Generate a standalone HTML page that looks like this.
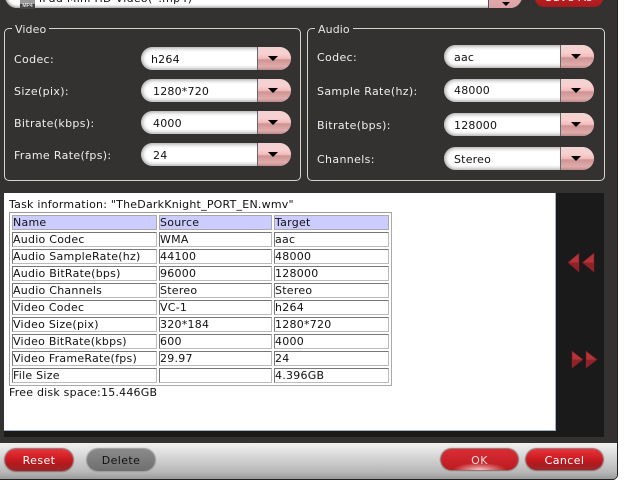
<!DOCTYPE html>
<html><head><meta charset="utf-8"><style>
html,body{margin:0;padding:0;background:#fff}
#w{position:relative;width:624px;height:490px;overflow:hidden;background:#fff;font-family:"DejaVu Sans",sans-serif;font-size:11px}
#win{position:absolute;left:0;top:0;width:617px;height:479px;background:#333231;border-bottom-right-radius:4px;box-shadow:1px 0 0 #222,0 1px 0 #222}
.a{position:absolute;white-space:nowrap}
.box{position:absolute;border:1px solid #d5d5cc;border-radius:5px;box-sizing:border-box}
.leg{position:absolute;background:#333231;color:#e6e6e6;padding:0 3px;line-height:14px;letter-spacing:.1px}
.lb{position:absolute;color:#eee;line-height:14px;letter-spacing:.35px;white-space:nowrap}
.c{position:absolute;width:150px;height:23px;border-radius:12px;background:#fff;overflow:hidden;box-shadow:inset 0 0 4px 1px #999}
.c span{position:absolute;left:12px;top:6px;line-height:14px;color:#111;letter-spacing:.2px}
.c i{position:absolute;right:0;top:0;width:34px;height:23px;background:linear-gradient(#f0d4d4 0,#f8d0d0 30%,#f4bcbc 50%,#cf9494 56%,#dfabab 85%,#bd8a8a 100%);border-left:1px solid #666;border-radius:0 12px 12px 0;box-sizing:border-box}
.c i:after{content:"";position:absolute;left:10px;top:9px;border:5px solid transparent;border-top:5px solid #000;border-bottom:0}
table{position:absolute;left:9px;top:212px;width:383px;height:173px;border-collapse:separate;border-spacing:2px;border:1px solid #9a9a9a;border-right-color:#aaa;border-bottom-color:#aaa;box-sizing:border-box;table-layout:fixed;font-size:11px;color:#111;background:#fff;letter-spacing:.25px}
td{box-sizing:border-box;border:1px solid #bbb;border-top-color:#777;border-left-color:#777;padding:0;height:15px;line-height:13px;white-space:nowrap;overflow:hidden}
tr.h td{background:#ccccff;border-color:#aaa}
.b{position:absolute;height:22px;border-radius:11px;color:#fff;text-align:center;line-height:24px;letter-spacing:.4px;background:linear-gradient(#e8343c 0,#cc1c22 45%,#b01a1e 70%,#98282a 100%);box-shadow:0 0 1px 1px #8a6a6a}
</style></head><body><div id="w"><div id="win">
<div class="a" style="left:5px;top:-20px;width:517px;height:28px;border-radius:12px;background:#fff;box-shadow:inset 0 0 3px 1px #888;overflow:hidden">
<div class="a" style="left:483px;top:0;width:34px;height:28px;background:linear-gradient(#f0c0c0,#dca0a4);border-left:1px solid #555;box-sizing:border-box"></div>
<div class="a" style="left:497px;top:22px;border:4px solid transparent;border-top:4px solid #000;border-bottom:0"></div></div>
<div class="a" style="left:20px;top:0;width:15px;height:4px;background:#999"></div>
<div class="a" style="left:20px;top:4px;width:15px;height:5px;background:#444;color:#ddd;font:bold 5px/5px 'Liberation Sans',sans-serif;text-align:center">MP4</div>
<div class="a" style="left:39px;top:-8px;line-height:14px;color:#111;letter-spacing:.3px">iPad Mini HD Video(*.mp4)</div>
<div class="a" style="left:535px;top:-16px;width:68px;height:23px;border-radius:9px;background:linear-gradient(#d8242a,#a81a1c);color:#fff;text-align:center;line-height:27px;letter-spacing:.5px">Save As</div>

<div class="box" style="left:4px;top:28px;width:297px;height:153px"></div>
<div class="leg" style="left:12px;top:23px">Video</div>
<div class="box" style="left:307px;top:28px;width:298px;height:153px"></div>
<div class="leg" style="left:315px;top:23px">Audio</div>

<div class="lb" style="left:14px;top:53px">Codec:</div>
<div class="lb" style="left:14px;top:85px">Size(pix):</div>
<div class="lb" style="left:14px;top:117px">Bitrate(kbps):</div>
<div class="lb" style="left:14px;top:149px">Frame Rate(fps):</div>
<div class="c" style="left:141px;top:47px"><span style="left:10px">h264</span><i></i></div>
<div class="c" style="left:141px;top:79px"><span>1280*720</span><i></i></div>
<div class="c" style="left:141px;top:111px"><span>4000</span><i></i></div>
<div class="c" style="left:141px;top:143px"><span>24</span><i></i></div>

<div class="lb" style="left:317px;top:51px">Codec:</div>
<div class="lb" style="left:317px;top:85px">Sample Rate(hz):</div>
<div class="lb" style="left:317px;top:119px">Bitrate(bps):</div>
<div class="lb" style="left:317px;top:153px">Channels:</div>
<div class="c" style="left:444px;top:45px"><span style="left:10px">aac</span><i></i></div>
<div class="c" style="left:444px;top:79px"><span style="left:10px;top:5px">48000</span><i></i></div>
<div class="c" style="left:444px;top:113px"><span style="left:10px">128000</span><i></i></div>
<div class="c" style="left:444px;top:147px"><span style="left:10px">Stereo</span><i></i></div>

<div class="a" style="left:4px;top:193px;width:600px;height:244px;background:#1b1a1a"></div>
<div class="a" style="left:4px;top:193px;width:552px;height:238px;background:#fff;border-right:1px solid #9fb0c4;border-bottom:1px solid #9fb0c4;box-sizing:border-box"></div>
<div class="a" style="left:9px;top:198px;line-height:14px;color:#111;letter-spacing:.22px">Task information: "TheDarkKnight_PORT_EN.wmv"</div>
<table><colgroup><col style="width:145px"><col style="width:113px"><col style="width:115px"></colgroup>
<tr class="h"><td>Name</td><td>Source</td><td>Target</td></tr>
<tr><td>Audio Codec</td><td>WMA</td><td>aac</td></tr>
<tr><td>Audio SampleRate(hz)</td><td>44100</td><td>48000</td></tr>
<tr><td>Audio BitRate(bps)</td><td>96000</td><td>128000</td></tr>
<tr><td>Audio Channels</td><td>Stereo</td><td>Stereo</td></tr>
<tr><td>Video Codec</td><td>VC-1</td><td>h264</td></tr>
<tr><td>Video Size(pix)</td><td>320*184</td><td>1280*720</td></tr>
<tr><td>Video BitRate(kbps)</td><td>600</td><td>4000</td></tr>
<tr><td>Video FrameRate(fps)</td><td>29.97</td><td>24</td></tr>
<tr><td>File Size</td><td></td><td>4.396GB</td></tr>
</table>
<div class="a" style="left:9px;top:386px;line-height:13px;color:#111;letter-spacing:.22px">Free disk space:15.446GB</div>

<svg class="a" style="left:560px;top:245px" width="45" height="130" viewBox="0 0 45 130">
<path d="M8 17.5 L19 8 L19 27Z" fill="#b5343a" stroke="#6e1a1e" stroke-width=".6"/><path d="M8 17.5 L19 17.5 L19 27Z" fill="#8e2428"/>
<path d="M22.5 17.5 L34 8 L34 27Z" fill="#b5343a" stroke="#6e1a1e" stroke-width=".6"/><path d="M22.5 17.5 L34 17.5 L34 27Z" fill="#8e2428"/>
<path d="M12 106 L23 114.5 L12 123Z" fill="#b5343a" stroke="#6e1a1e" stroke-width=".6"/><path d="M12 114.5 L23 114.5 L12 123Z" fill="#8e2428"/>
<path d="M26 106 L37 114.5 L26 123Z" fill="#b5343a" stroke="#6e1a1e" stroke-width=".6"/><path d="M26 114.5 L37 114.5 L26 123Z" fill="#8e2428"/>
</svg>

<div class="a" style="left:0;top:443px;width:617px;height:36px;background:linear-gradient(#f0f0f0,#dcdcdc 30%,#b8b8b8 80%,#9a9a9a);border-bottom-right-radius:4px"></div>
<div class="b" style="left:5px;top:449px;width:68px">Reset</div>
<div class="b" style="left:87px;top:449px;width:68px;color:#111;background:linear-gradient(#8a8a8a,#6f6f6f);box-shadow:0 0 1px 1px #999">Delete</div>
<div class="b" style="left:441px;top:449px;width:77px;height:21px;line-height:23px;color:#f4dcdc;background:radial-gradient(ellipse 30px 8px at 50% 100%,#f6c8c8,rgba(220,40,50,0) 90%),linear-gradient(#dc2c34,#b81c20)">OK</div>
<div class="b" style="left:526px;top:449px;width:77px;height:21px;line-height:23px">Cancel</div>
</div></div></body></html>
